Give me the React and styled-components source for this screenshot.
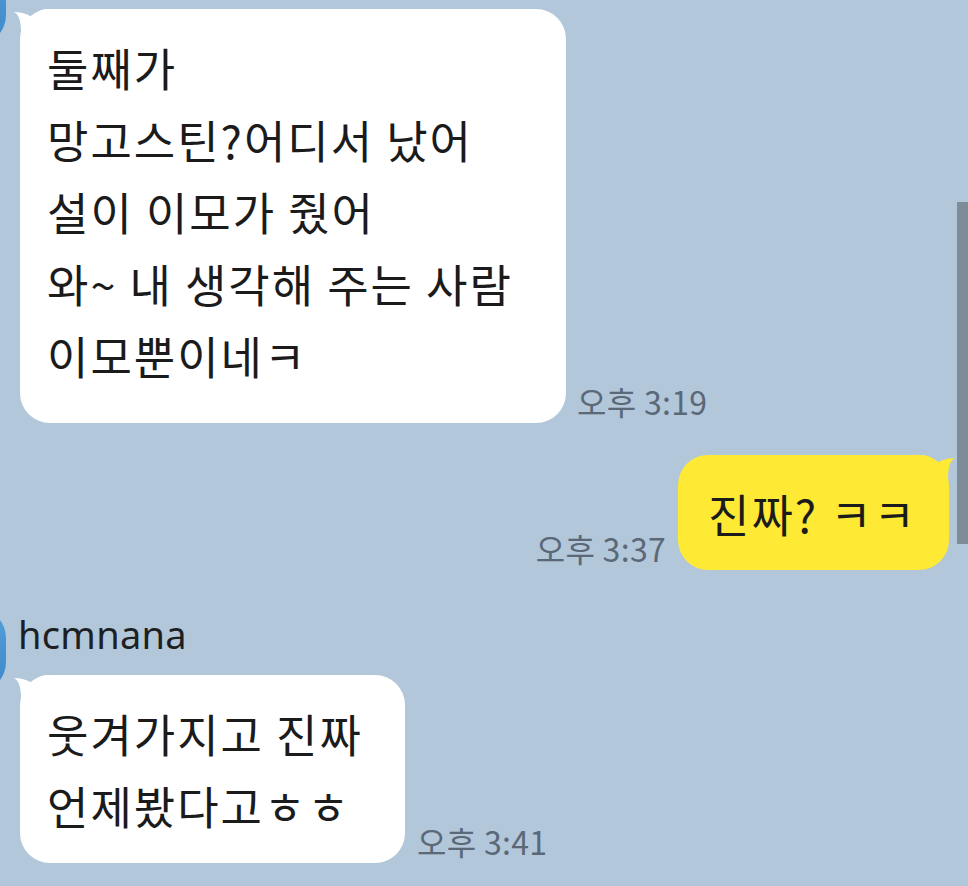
import React from "react";
import styled, { createGlobalStyle } from "styled-components";

const Global = createGlobalStyle`
  html, body {
    margin: 0;
    padding: 0;
    background: #b2c7da;
    overflow: hidden;
  }
  #root {
    width: 968px;
    height: 886px;
  }
`;

const Screen = styled.div`
  width: 968px;
  height: 886px;
  background: #b2c7da;
  padding-top: 9px;
  box-sizing: border-box;
  overflow: hidden;
  display: flex;
  flex-direction: column;
  font-family: "Noto Sans CJK KR", "Noto Sans", sans-serif;
`;

const ReceivedGroup = styled.div`
  display: flex;
  align-items: flex-start;
  gap: 14px;
  margin-top: ${(p) => p.$top || 0}px;
`;

const Avatar = styled.div`
  width: 80px;
  height: 84px;
  flex: none;
  margin-left: -74px;
  margin-top: ${(p) => p.$offset || 0}px;
  border-radius: 30px;
  background: linear-gradient(160deg, #5aa6e0 0%, #3d88c9 100%);
`;

const Column = styled.div`
  display: flex;
  flex-direction: column;
  padding-top: ${(p) => p.$pad || 0}px;
`;

const Name = styled.div`
  font-family: "Noto Sans", "Noto Sans CJK KR", sans-serif;
  font-size: 38px;
  line-height: 44px;
  color: #1e1f22;
  margin-bottom: 19px;
  margin-left: -2px;
  letter-spacing: 0.3px;
`;

const MessageRow = styled.div`
  display: flex;
  align-items: flex-end;
  gap: ${(p) => p.$gap || 11}px;
  justify-content: ${(p) => (p.$mine ? "flex-end" : "flex-start")};
  padding-right: ${(p) => (p.$mine ? 19 : 0)}px;
  margin-top: ${(p) => p.$top || 0}px;
`;

const Bubble = styled.div`
  position: relative;
  box-sizing: border-box;
  width: ${(p) => p.$w}px;
  padding: 23px 0 ${(p) => p.$bottom}px ${(p) => p.$left || 27}px;
  border-radius: 30px;
  background: ${(p) => (p.$mine ? "#fee934" : "#ffffff")};
  color: #1b1b1b;
  font-size: 45px;
  line-height: 72px;
  letter-spacing: 2px;
  white-space: nowrap;
`;

const Line = styled.div`
  height: 72px;
`;

const Time = styled.div`
  font-size: 32px;
  line-height: 36px;
  color: #5a6877;
  white-space: nowrap;
  margin-bottom: 4px;
  letter-spacing: 0.3px;
  font-family: "Noto Sans CJK KR", "Noto Sans", sans-serif;
`;

const TailSvg = styled.svg`
  position: absolute;
  top: 0;
  width: 36px;
  height: 32px;
  ${(p) =>
    p.$side === "left"
      ? "left: -8px;"
      : "right: -8px; transform: scaleX(-1);"}
`;

const Scrollbar = styled.div`
  position: fixed;
  right: 0;
  top: 202px;
  width: 11px;
  height: 342px;
  background: #7e8b99;
`;

function Tail({ side, color }) {
  return (
    <TailSvg $side={side} viewBox="0 0 36 32">
      <path
        d="M1.5 3 Q 8 5 9 20 L 9 32 L 36 32 L 36 0 Q 26 0 20 8 Q 12 3 1.5 3 Z"
        fill={color}
      />
    </TailSvg>
  );
}

export default function App() {
  return (
    <>
      <Global />
      <Screen>
        <ReceivedGroup>
          <Avatar $offset={-48} />
          <Column>
            <MessageRow>
              <Bubble $w={546} $bottom={31}>
                <Tail side="left" color="#ffffff" />
                <Line>둘째가</Line>
                <Line>망고스틴?어디서 났어</Line>
                <Line>설이 이모가 줬어</Line>
                <Line>와~ 내 생각해 주는 사람</Line>
                <Line>이모뿐이네ㅋ</Line>
              </Bubble>
              <Time>오후 3:19</Time>
            </MessageRow>
          </Column>
        </ReceivedGroup>

        <MessageRow $mine $gap={12} $top={32}>
          <Time>오후 3:37</Time>
          <Bubble $mine $w={271} $bottom={20} $left={30}>
            <Tail side="right" color="#fee934" />
            <Line>진짜? ㅋㅋ</Line>
          </Bubble>
        </MessageRow>

        <ReceivedGroup $top={38}>
          <Avatar />
          <Column $pad={4}>
            <Name>hcmnana</Name>
            <MessageRow $gap={12}>
              <Bubble $w={385} $bottom={21}>
                <Tail side="left" color="#ffffff" />
                <Line>웃겨가지고 진짜</Line>
                <Line>언제봤다고ㅎㅎ</Line>
              </Bubble>
              <Time>오후 3:41</Time>
            </MessageRow>
          </Column>
        </ReceivedGroup>
      </Screen>
      <Scrollbar />
    </>
  );
}
